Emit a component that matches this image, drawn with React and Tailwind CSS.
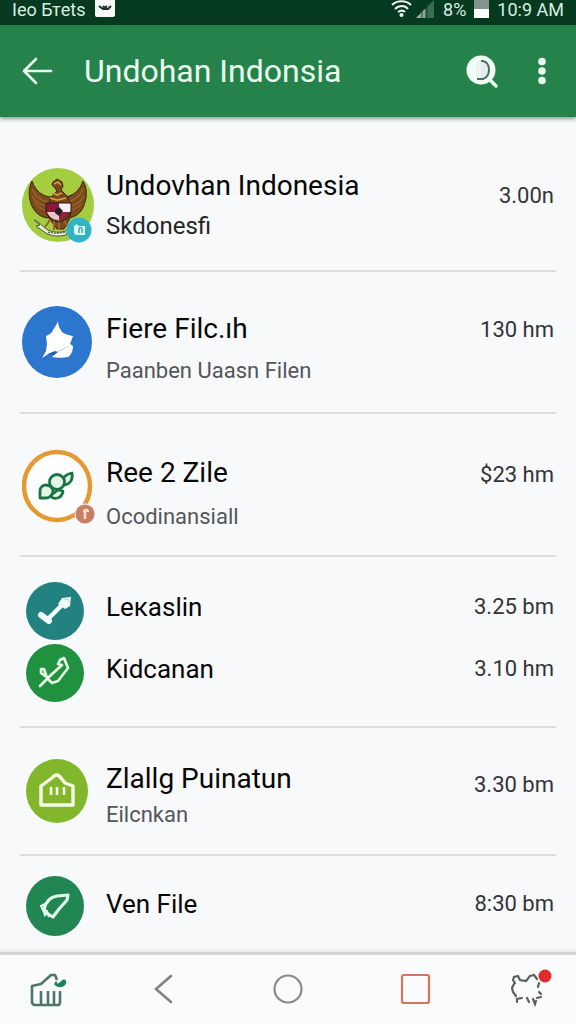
import clsx from 'clsx';

function GarudaAvatar() {
    return (
        <svg viewBox="0 0 72 76" className="h-[76px] w-[72px]" aria-hidden="true">
            <ellipse cx="36" cy="37" rx="36" ry="37" fill="#a4cd3f" />
            {/* wings */}
            <path d="M10 13C5 22 7 36 13 43c4 5 9 7 14 7l3-21C20 29 13 22 10 13Z" fill="#7b4a1d" stroke="#40260f" />
            <path d="M61 13c6 9 3 23-2 30-4 5-9 7-14 7l-4-21c10 0 17-7 20-16Z" fill="#7b4a1d" stroke="#40260f" />
            <path d="M10 21c3 7 9 12 17 13M10 28c4 7 9 10 17 11M13 35c4 5 8 7 13 8M61 21c-3 7-9 12-17 13M62 28c-4 7-9 10-17 11M59 36c-4 5-8 6-13 7" fill="none" stroke="#a06b2a" strokeWidth="1.2" />
            {/* head, body and tail */}
            <path d="M30 17l1-3 4-3 5 3 1 4-2 4 7 7 2 6v15l-6 11h-7l-8-11V35l2-6 6-6-2-3Z" fill="#7a461c" stroke="#3d2610" />
            <path d="M32 16l4-2 3 3M31 25l4 2 5-2M28 30l7 2 9-2" fill="none" stroke="#d3a141" strokeWidth="1.7" />
            <path d="M28 52l-5 7M42 52l4 7M32 50v12M37 50v12" stroke="#9d6329" strokeWidth="2" />
            {/* shield */}
            <path d="M24 35h13v9H24Z" fill="#8d1738" />
            <path d="M37 35h12v9H37Z" fill="#f7edf0" />
            <path d="M25 44h12v8c-6 0-10-3-12-8Z" fill="#e8c5cb" />
            <path d="M37 44h11c-1 4-5 8-11 8Z" fill="#8b2639" />
            <path d="M24 35h25v7c0 6-5 10-12 12-8-2-13-6-13-12Z" fill="none" stroke="#241a1c" />
            <path d="M33 42l4-3 4 4-4 5-4-3Z" fill="#291c22" />
            {/* ribbon */}
            <path d="M12 52c5 1 8 7 14 10 7 3 13 3 20 0l-2 5c-8 2-15 1-20-2l-3-2-7-5 4-1Z" fill="#edf0db" stroke="#4d563b" />
            <path d="M26 64c7 2 13 1 18 0" fill="none" stroke="#53614c" strokeWidth="1.3" strokeDasharray="2 1" />
            {/* badge */}
            <circle cx="57" cy="62" r="12.5" fill="#31b4c5" />
            <path d="m52 58 3-2 1 2h7v9h-9l-2-2Z" fill="#e4fbf8" />
            <path d="M57 65v-4c0-2 3-2 3 0v4" fill="none" stroke="#2eafc0" strokeWidth="1.5" />
        </svg>
    );
}

function LeafAvatar() {
    return (
        <svg viewBox="0 0 70 72" className="h-[72px] w-[70px]" aria-hidden="true">
            <ellipse cx="35" cy="36" rx="35" ry="36" fill="#2d76ce" />
            <path d="M36 15c0 5 2 8 4 11 4 3 7 3 11 4l-3 8 3 2c0 5-2 9-5 11-5 1-11 1-16 0l5-5-7 1-8 5 4-7 1-7-1-8c4-2 6-3 7-6 2-3 4-6 5-9Z" fill="#fff" />
            <path d="M36 46c4-3 8-4 11-6" fill="none" stroke="#b5cde4" />
            <path d="m26 48 7-3 3 1-4 3Z" fill="#235db1" />
        </svg>
    );
}

function RingAvatar() {
    return (
        <svg viewBox="0 0 74 76" className="h-[76px] w-[74px]" aria-hidden="true">
            <ellipse cx="35" cy="37" rx="33" ry="34" fill="#fff" stroke="#e49a30" strokeWidth="4.5" />
            <g fill="#e4f6e9" stroke="#1b7446" strokeWidth="2.8" strokeLinejoin="round">
                <path d="M28 47c4 4 12 3 13-5l-5-1Z" />
                <path d="M41 33c-1-5 4-8 9-9 1 6-1 11-8 12Z" />
                <circle cx="35" cy="33" r="7.5" />
                <path d="M18 49v-7c0-4 3-6 6-6 4 0 7 3 7 6s-3 7-7 7Z" />
            </g>
            <circle cx="63" cy="65" r="10.5" fill="#faf5f4" />
            <circle cx="63" cy="65" r="9.5" fill="#c78068" />
            <path d="M63 70v-8h-2m2 0c1-2 3-1 3 1" fill="none" stroke="#fbe0c3" strokeWidth="2.5" />
        </svg>
    );
}

function WrenchAvatar() {
    return (
        <svg viewBox="0 0 58 58" className="size-[58px]" aria-hidden="true">
            <circle cx="29" cy="29" r="29" fill="#22827f" />
            <path d="m23 36 14-14" stroke="#f1fffa" strokeWidth="4.5" />
            <path d="m15 33 8 6" stroke="#f1fffa" strokeWidth="6" strokeLinecap="round" />
            <path d="m32 22 4-6 9-1-1 9-5 3Z" fill="#f1fffa" />
            <path d="m38 17 5 1v3" fill="none" stroke="#acd7cd" />
        </svg>
    );
}

function TicksAvatar() {
    return (
        <svg viewBox="0 0 58 58" className="size-[58px]" aria-hidden="true">
            <circle cx="29" cy="29" r="29" fill="#20923f" />
            <path d="M14 42 25 31l11-10-4-1 2-4 4-2 4 10-10 13-6 2-5-5-3-9-3 0v4l4 3" fill="none" stroke="#eaffe4" strokeWidth="2.6" strokeLinecap="round" strokeLinejoin="round" />
        </svg>
    );
}

function HouseAvatar() {
    return (
        <svg viewBox="0 0 62 64" className="h-16 w-[62px]" aria-hidden="true">
            <ellipse cx="31" cy="32" rx="31" ry="32" fill="#82b72c" />
            <path d="M15 46V27l11-8c3-4 6-4 9 0l4 5 8 3v19Z" fill="none" stroke="#f8ffe9" strokeWidth="3.4" strokeLinejoin="round" />
            <path d="M25 28v8M31 28v8M38 28v8" stroke="#f8ffe9" strokeWidth="2.6" />
        </svg>
    );
}

function RocketAvatar() {
    return (
        <svg viewBox="0 0 58 60" className="h-[60px] w-[58px]" aria-hidden="true">
            <ellipse cx="29" cy="30" rx="29" ry="30" fill="#218653" />
            <path d="M18 33c2-8 7-12 13-13l11-1-1 5-8 9-6 8-5-3Z" fill="none" stroke="#e0ffed" strokeWidth="3.2" strokeLinejoin="round" />
            <path d="m19 28-4 2 2 4 2 5 2-3 2 5" fill="none" stroke="#e0ffed" strokeWidth="2" />
        </svg>
    );
}

const groups = [
    {
        className: 'h-[155px] pt-6',
        items: [{ Avatar: GarudaAvatar, title: 'Undovhan Indonesia', subtitle: 'Skdonesfi', time: '3.00n', strong: true, textClass: 'gap-2', timeClass: 'pb-5' }],
    },
    {
        className: 'h-[142px]',
        items: [{ Avatar: LeafAvatar, title: 'Fiere Filc.ıh', subtitle: 'Paanben Uaasn Filen', time: '130 hm', textClass: 'gap-2.5 pt-4', timeClass: 'pb-6' }],
    },
    {
        className: 'h-[143px] pt-1',
        items: [{ Avatar: RingAvatar, title: 'Ree 2 Zile', subtitle: 'Ocodinansiall', time: '$23 hm', textClass: 'gap-3 pt-4', timeClass: 'pb-6' }],
    },
    {
        className: 'h-[171px]',
        items: [
            { Avatar: WrenchAvatar, title: 'Leкaslin', time: '3.25 bm', textClass: 'pb-2', timeClass: 'pb-2' },
            { Avatar: TicksAvatar, title: 'Kidcanan', time: '3.10 hm', textClass: 'pb-2', timeClass: 'pb-2' },
        ],
    },
    {
        className: 'h-[128px]',
        items: [{ Avatar: HouseAvatar, title: 'Zlallg Puinatun', subtitle: 'Eilcnkan', time: '3.30 bm', textClass: 'gap-1 pt-3', timeClass: 'pb-3' }],
    },
    {
        className: 'h-24 pt-1',
        items: [{ Avatar: RocketAvatar, title: 'Ven File', time: '8:30 bm', textClass: 'pb-1', timeClass: 'pb-1' }],
    },
];

function FileRow({ Avatar, title, subtitle, time, strong, textClass, timeClass }) {
    return (
        <div className="flex items-center">
            <div className={clsx('w-[84px] shrink-0', Avatar === HouseAvatar || !subtitle ? 'pl-1' : 'pl-0')}>
                <Avatar />
            </div>
            <div className={clsx('flex min-w-0 flex-1 flex-col', textClass)}>
                <h2 className={clsx('leading-8 whitespace-nowrap text-[#080808]', subtitle ? 'text-[28px]' : 'text-[26px]')}>{title}</h2>
                {subtitle && (
                    <p className={clsx('leading-8 whitespace-nowrap', strong ? 'text-2xl text-[#242527]' : 'text-[22px] text-[#54565a]')}>{subtitle}</p>
                )}
            </div>
            <span className={clsx('shrink-0 text-[22px] leading-8 text-[#333438]', timeClass)}>{time}</span>
        </div>
    );
}

function StatusBar() {
    return (
        <div className="flex h-[25px] items-start justify-between bg-[#053a20] px-3 text-lg leading-5 text-[#d9eee0]">
            <div className="flex items-start gap-2.5">
                <span>Ieo Бтets</span>
                <svg viewBox="0 0 20 20" className="size-5" aria-hidden="true">
                    <rect y="-2" width="20" height="19" rx="2" fill="#f6f9f6" />
                    <path d="m4 6 4 3h5l3-3M8 6l2 2 2-2" fill="none" stroke="#1d3025" strokeWidth="2" />
                </svg>
            </div>
            <div className="flex items-start gap-2">
                <svg viewBox="0 0 44 20" className="h-5 w-11" aria-hidden="true">
                    <path d="M1 5c5-5 14-5 19 0M4 9c4-4 10-4 13 0M7 12c3-2 5-2 7 0" fill="none" stroke="#e8f7ec" strokeWidth="2" />
                    <circle cx="10.500" cy="15" r="2" fill="#e8f7ec" />
                    <path d="m25 18 18-18v18Z" fill="#396c50" />
                    <path d="m25 18 9-9v9Z" fill="#8eaf9b" />
                    <path d="M31 9v9M36 4v14" stroke="#174a30" />
                </svg>
                <span>8%</span>
                <svg viewBox="0 0 15 20" className="h-5 w-[15px]" aria-hidden="true">
                    <path d="M0 0h15v9H0Z" fill="#81958a" />
                    <path d="M0 9h15v9H0Z" fill="#fff" />
                </svg>
                <span>10:9 AM</span>
            </div>
        </div>
    );
}

function Toolbar() {
    return (
        <div className="flex h-[92px] items-center bg-[#24824a] pr-4 pl-5 text-[#eafff0]">
            <button type="button" aria-label="Back" className="w-16">
                <svg viewBox="0 0 36 36" className="size-9" fill="none" stroke="currentColor" strokeWidth="2.7" strokeLinecap="round" strokeLinejoin="round">
                    <path d="M31 18H4M16 6 4 18l12 12" />
                </svg>
            </button>
            <h1 className="flex-1 text-[32px] leading-10 whitespace-nowrap">Undohan Indonsia</h1>
            <button type="button" aria-label="Search">
                <svg viewBox="0 0 36 36" className="size-9">
                    <circle cx="17" cy="17" r="14.500" fill="#f1fff5" />
                    <path d="M14 8h5c8 2 8 15 0 18h-6" fill="#e6ebee" stroke="#466f66" strokeWidth="2" />
                    <path d="M12 7h5v18h-5Z" fill="#eef3f4" />
                    <path d="m25 26 7 7" stroke="#eafff0" strokeWidth="3.5" strokeLinecap="round" />
                </svg>
            </button>
            <button type="button" aria-label="More options" className="ml-6">
                <svg viewBox="0 0 36 36" className="size-9" fill="currentColor">
                    <circle cx="18" cy="8.500" r="3.8" />
                    <circle cx="18" cy="18" r="3.8" />
                    <circle cx="18" cy="27.500" r="3.8" />
                </svg>
            </button>
        </div>
    );
}

function BottomNav() {
    return (
        <nav className="flex h-[72px] items-center justify-between border-t-3 border-[#d2d2d4] bg-[#fafbfc] px-6 shadow-[0_-2px_4px_rgba(0,0,0,0.08)]">
            <button type="button" aria-label="Files">
                <svg viewBox="0 0 48 48" className="size-12" fill="none" stroke="#4e7567" strokeWidth="2.6" strokeLinejoin="round">
                    <path d="M36 25v12l-1 2H10l-2-2V20l9-2 10-9h4l2 5M17 39V25M24 39V25M30 39V25" />
                    <path d="m32 16 1 3c2-1 4-2 5-4 3-2 5 1 2 4-2 2-7 2-9-1Z" fill="#178257" stroke="#178257" strokeWidth="1.5" />
                </svg>
            </button>
            <button type="button" aria-label="Back">
                <svg viewBox="0 0 48 48" className="size-12" fill="none" stroke="#818284" strokeWidth="2.6" strokeLinecap="round">
                    <path d="M27 10 12 23l15 13" />
                </svg>
            </button>
            <button type="button" aria-label="Home">
                <svg viewBox="0 0 48 48" className="size-12" fill="none" stroke="#88898b" strokeWidth="2.2">
                    <circle cx="24" cy="23" r="13.500" />
                </svg>
            </button>
            <button type="button" aria-label="Recent apps">
                <svg viewBox="0 0 48 48" className="size-12" fill="none" stroke="#d0775b" strokeWidth="2.2">
                    <rect x="18" y="9" width="27" height="28" rx="2" />
                </svg>
            </button>
            <button type="button" aria-label="Settings">
                <svg viewBox="0 0 48 48" className="size-12" fill="none" stroke="#5d6062" strokeWidth="2.2" strokeLinecap="round">
                    <path d="m11 17-2-3 1-3 4-1 2 4 6 1 4-5 4-1 3 4M10 18l-2 4 1 4 3 4M35 17l-1 4M35 26l2 2M13 36v-3l5-1M23 32l2 4M29 33l2 5 1-3M33 32l4-1" />
                    <circle cx="41" cy="10" r="6.5" fill="#df2c2a" stroke="none" />
                </svg>
            </button>
        </nav>
    );
}

export default function App() {
    return (
        <div className="flex min-h-screen flex-col bg-[#f8f9fb] font-['Roboto',sans-serif]">
            <header className="relative shadow-[0_2px_4px_rgba(0,0,0,0.4)]">
                <StatusBar />
                <Toolbar />
            </header>
            <main className="flex-1 px-5">
                <ul>
                    {groups.map((group, i) => (
                        <li
                            key={group.items[0].title}
                            className={clsx(
                                'flex flex-col justify-center gap-1 border-[#dddee1] px-0.5',
                                i < groups.length - 1 && 'border-b-2',
                                group.className,
                            )}
                        >
                            {group.items.map((item) => (
                                <FileRow key={item.title} {...item} />
                            ))}
                        </li>
                    ))}
                </ul>
            </main>
            <BottomNav />
        </div>
    );
}
